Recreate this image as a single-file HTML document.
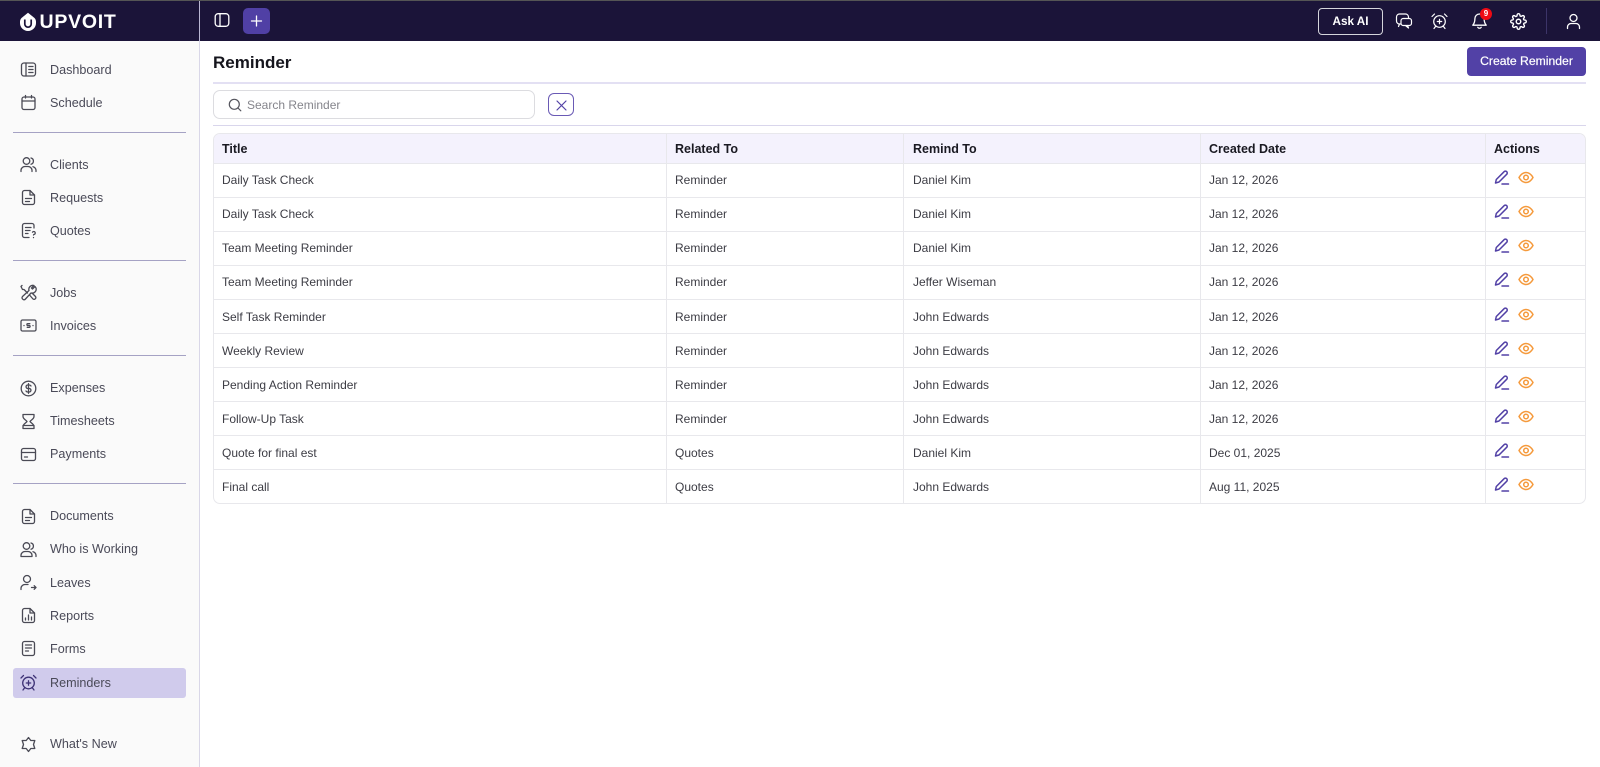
<!DOCTYPE html>
<html lang="en">
<head>
<meta charset="utf-8">
<title>Reminder</title>
<style>
*{box-sizing:border-box}
html,body{margin:0;padding:0;width:1600px;height:767px;overflow:hidden;background:#fff;font-family:"Liberation Sans",sans-serif;color:#2b2b35}
.abs{position:absolute}
#strip{position:absolute;left:0;top:0;width:1600px;height:1px;background:#555}
#top{position:absolute;left:0;top:1px;width:1600px;height:40px;background:#1b1439}
#side{position:absolute;left:0;top:41px;width:200px;height:726px;background:#fafafa;border-right:1px solid #d9d7e8}
#vline{position:absolute;left:199px;top:1px;width:1px;height:40px;background:#b9b6d3}
.logo{position:absolute;left:39.500px;top:11px;font-size:19.500px;font-weight:bold;color:#fff;letter-spacing:.75px;line-height:23px}
.it{position:absolute;left:50px;font-size:12.600px;line-height:16px;color:#4a4a58}
.ic{position:absolute;left:20px;width:17px;height:17px;fill:none;stroke:#4a4a55;stroke-width:1.3;stroke-linecap:round;stroke-linejoin:round}
.dv{position:absolute;left:13px;width:173px;height:1px;background:#a5a2c4}
.act{position:absolute;left:13px;top:668px;width:173px;height:30px;background:#d0cbec;border-radius:3px}
h1{position:absolute;left:213px;top:52px;margin:0;font-size:17px;line-height:22px;font-weight:bold;color:#15151d}
.btn{position:absolute;left:1467px;top:47px;width:119px;height:29px;background:#5241a6;border-radius:4px;color:#fff;font-size:12.200px;line-height:29px;text-align:center;-webkit-text-stroke:.2px #fff}
.ln{position:absolute;left:213px;width:1373px;height:2px;background:#e3e0f3}
.search{position:absolute;left:213px;top:90px;width:322px;height:29px;border:1px solid #dcdce0;border-radius:7px;background:#fff}
.search span{position:absolute;left:33px;top:6px;font-size:12px;line-height:16px;color:#85858c}
.x{position:absolute;left:548px;top:93px;width:26px;height:23px;border:1px solid #6a5ab5;border-radius:6px}
table{position:absolute;left:213px;top:133px;width:1373px;height:371px;border-collapse:separate;border-spacing:0;table-layout:fixed;border:1px solid #e8e8ec;border-radius:7px;overflow:hidden;font-size:12px}
th{height:29px;background:#f4f2fd;text-align:left;padding:0 0 0 8px;font-size:12.500px;font-weight:bold;color:#1a1a22;border-left:1px solid #e8e8ec}
td{height:34px;padding:0 0 2px 8px;color:#3c3c44;border-top:1px solid #e8e8ec;border-left:1px solid #e8e8ec}
tr:nth-child(n+6) td{padding-bottom:0}
th:first-child,td:first-child{border-left:0}
th:nth-child(3),td:nth-child(3){padding-left:9px}
td svg{display:block;fill:none;stroke-linecap:round;stroke-linejoin:round}
td .w{display:flex;gap:8px;align-items:center;margin-top:-4px}
</style>
</head>
<body>
<div id="strip"></div>
<div id="top"></div>
<div id="vline"></div>

<svg class="abs" style="left:20px;top:12px" width="16" height="19" viewBox="0 0 16 19"><path d="M8 .7L1.500 6Q0 7.500 0 10V11A8 8 0 0 0 16 11V10Q16 7.500 14.500 6Z" fill="#fff"/><path d="M4.800 7.500V12A3.200 3.200 0 0 0 11.200 12V7.500" fill="none" stroke="#1b1439" stroke-width="1.700"/><path d="M8 4V13" stroke="#fff" stroke-width="2"/></svg>
<div class="logo">UPVOIT</div>

<svg class="abs" style="left:214px;top:12px" width="16" height="16" viewBox="0 0 16 16" fill="none" stroke="#fff" stroke-width="1.3"><rect x="1.2" y="1.7" width="13.6" height="12.6" rx="3"/><path d="M6 1.7V14.3"/></svg>
<div class="abs" style="left:243px;top:8px;width:27px;height:26px;background:#5040a5;border-radius:5px"></div>
<svg class="abs" style="left:250px;top:14px" width="13" height="14" viewBox="0 0 13 14" stroke="#fff" stroke-width="1.3" stroke-linecap="round"><path d="M6.5 2V12M1.5 7H11.5"/></svg>

<div class="abs" style="left:1318px;top:8px;width:65px;height:27px;border:1px solid #d5d5dc;border-radius:4px;color:#fff;font-size:11.700px;font-weight:bold;line-height:25px;text-align:center">Ask AI</div>

<svg class="abs" style="left:1395px;top:12px" width="18" height="18" viewBox="0 0 18 18" fill="none" stroke="#fff" stroke-width="1.2" stroke-linejoin="round" stroke-linecap="round"><path d="M6 12H4.500A3 3 0 0 1 1.500 9V5A3 3 0 0 1 4.500 2H10.500A3 3 0 0 1 13.500 5V6"/><path d="M4.500 12L3.500 14.500"/><rect x="6" y="6.500" width="10.500" height="7" rx="2.200"/><path d="M12.500 13.500L13.500 16L10.500 13.500"/></svg>
<svg class="abs" style="left:1431px;top:12px" width="17" height="18" viewBox="0 0 17 18" fill="none" stroke="#fff" stroke-width="1.2" stroke-linecap="round"><circle cx="8.500" cy="9.500" r="5.800"/><path d="M8.500 7.300V11.700M6.300 9.500H10.700M1 4.500L3.500 2M16 4.500L13.500 2M4.500 14.500L3 16.500M12.500 14.500L14 16.500"/></svg>
<svg class="abs" style="left:1471px;top:12px" width="17" height="18" viewBox="0 0 17 18" fill="none" stroke="#fff" stroke-width="1.300" stroke-linecap="round" stroke-linejoin="round"><path d="M8.500 2A4.600 4.600 0 0 0 3.900 6.600C3.900 10 3.300 11.400 1.800 13.200H15.200C13.700 11.400 13.100 10 13.100 6.600A4.600 4.600 0 0 0 8.500 2Z"/><path d="M6.800 15.300A2 2 0 0 0 10.200 15.300"/></svg>
<div class="abs" style="left:1480px;top:8px;width:12px;height:12px;border-radius:50%;background:#ef0a14;color:#fff;font-size:8px;font-weight:bold;line-height:12px;text-align:center">9</div>
<svg class="abs" style="left:1510px;top:13px" width="17" height="17" viewBox="0 0 24 24" fill="none" stroke="#fff" stroke-width="2" stroke-linecap="round" stroke-linejoin="round"><circle cx="12" cy="12" r="3.200"/><path d="M19.400 15a1.650 1.650 0 0 0 .33 1.820l.06.06a2 2 0 1 1-2.830 2.830l-.06-.06a1.650 1.650 0 0 0-2.820 1.170V21a2 2 0 1 1-4 0v-.09A1.650 1.650 0 0 0 7.200 19.700l-.06.06a2 2 0 1 1-2.830-2.830l.06-.06A1.650 1.650 0 0 0 3.200 14H3a2 2 0 1 1 0-4h.09A1.650 1.650 0 0 0 4.300 7.200l-.06-.06a2 2 0 1 1 2.830-2.830l.06.06A1.650 1.650 0 0 0 10 3.200V3a2 2 0 1 1 4 0v.09a1.650 1.650 0 0 0 2.800 1.200l.06-.06a2 2 0 1 1 2.830 2.830l-.06.06A1.650 1.650 0 0 0 20.800 10H21a2 2 0 1 1 0 4h-.09a1.650 1.650 0 0 0-1.510 1z"/></svg>
<div class="abs" style="left:1546px;top:8px;width:1px;height:26px;background:#3c3468"></div>
<svg class="abs" style="left:1565px;top:13px" width="17" height="17" viewBox="0 0 17 17" fill="none" stroke="#fff" stroke-width="1.300" stroke-linecap="round"><circle cx="8.500" cy="5" r="3.500"/><path d="M2.500 15.500V14A3.500 3.500 0 0 1 6 10.500H11A3.500 3.500 0 0 1 14.500 14V15.500"/></svg>

<div id="side"></div>
<div class="act"></div>
<div class="dv" style="top:132px"></div>
<div class="dv" style="top:260px"></div>
<div class="dv" style="top:355px"></div>
<div class="dv" style="top:483px"></div>

<svg class="ic" style="top:61px" viewBox="0 0 17 17"><rect x="1.500" y="2" width="14" height="13" rx="2.500"/><path d="M6 2V15M8.800 5.500H13M8.800 8.500H13M8.800 11.500H13"/></svg>
<div class="it" style="top:62px">Dashboard</div>
<svg class="ic" style="top:94px" viewBox="0 0 17 17"><rect x="2" y="3" width="13" height="12.500" rx="2"/><path d="M2 7H15M5.500 1.500V4M11.500 1.500V4"/></svg>
<div class="it" style="top:95px">Schedule</div>

<svg class="ic" style="top:156px" viewBox="0 0 17 17"><circle cx="6.500" cy="5" r="3.300"/><path d="M1 15.500V14A4 4 0 0 1 5 10.500H8A4 4 0 0 1 12 14V15.500M11 2A3.200 3.200 0 0 1 11 8.200M13 10.700A4 4 0 0 1 16 14V15.500"/></svg>
<div class="it" style="top:157px">Clients</div>
<svg class="ic" style="top:189px" viewBox="0 0 17 17"><path d="M4.500 1.500H10L14.500 6V13.500A2 2 0 0 1 12.500 15.500H4.500A2 2 0 0 1 2.500 13.500V3.500A2 2 0 0 1 4.500 1.500Z"/><path d="M10 1.500V6H14.500M5.500 9.500H11.500M5.500 12.500H9.500"/></svg>
<div class="it" style="top:190px">Requests</div>
<svg class="ic" style="top:222px" viewBox="0 0 17 17"><path d="M14 6V3.500A2 2 0 0 0 12 1.500H4.500A2 2 0 0 0 2.500 3.500V13.500A2 2 0 0 0 4.500 15.500H9"/><path d="M5.500 5.500H11M5.500 8.500H10M5.500 11.500H8M12.500 10.200A1.500 1.500 0 1 1 13.800 12.500L13.500 13M13.500 15.500V15.600"/></svg>
<div class="it" style="top:223px">Quotes</div>

<svg class="ic" style="top:284px" viewBox="0 0 17 17"><path d="M2 1.500L1 2.500L2.500 5.500H4L7.500 9M15 2.500L12.500 5L11.500 4L14 1.500A4 4 0 0 0 9 6.500L2.500 12.500A2 2 0 0 0 5 15.500L11 9A4 4 0 0 0 16 4Z"/><path d="M9.500 11L13 15A1.800 1.800 0 0 0 15.500 12.500L12 9"/></svg>
<div class="it" style="top:285px">Jobs</div>
<svg class="ic" style="top:317px" viewBox="0 0 17 17"><rect x="1" y="3" width="15" height="11" rx="1.500"/><path d="M4 8.500V8.600M13 8.500V8.600M9.800 6.700H7.800A.9.900 0 0 0 7.800 8.500H9.200A.9.900 0 0 1 9.200 10.300H7.200"/></svg>
<div class="it" style="top:318px">Invoices</div>

<svg class="ic" style="top:380px" viewBox="0 0 17 17"><circle cx="8.500" cy="8.500" r="7.300"/><path d="M11 6A2 2 0 0 0 9.200 5H7.800A1.700 1.700 0 0 0 7.800 8.500H9.200A1.700 1.700 0 0 1 9.200 12H7.800A2 2 0 0 1 6 11M8.500 3.700V13.300"/></svg>
<div class="it" style="top:380px">Expenses</div>
<svg class="ic" style="top:413px" viewBox="0 0 17 17"><path d="M3 1.500H14V3.500C14 6 11 7 10 8.500C11 10 14 11 14 13.500V15.500H3V13.500C3 11 6 10 7 8.500C6 7 3 6 3 3.500Z"/><path d="M3 12.500H14"/></svg>
<div class="it" style="top:413px">Timesheets</div>
<svg class="ic" style="top:446px" viewBox="0 0 17 17"><rect x="1.500" y="2.500" width="14" height="12" rx="2"/><path d="M1.500 6.500H15.500M4.500 11H7.500"/></svg>
<div class="it" style="top:446px">Payments</div>

<svg class="ic" style="top:508px" viewBox="0 0 17 17"><path d="M4.500 1.500H10L14.500 6V13.500A2 2 0 0 1 12.500 15.500H4.500A2 2 0 0 1 2.500 13.500V3.500A2 2 0 0 1 4.500 1.500Z"/><path d="M10 1.500V6H14.500M5.500 9.500H11.500M5.500 12.500H9.500"/></svg>
<div class="it" style="top:508px">Documents</div>
<svg class="ic" style="top:541px" viewBox="0 0 17 17"><circle cx="6.500" cy="5" r="3.300"/><path d="M1 15.500V14A4 4 0 0 1 5 10.500H8A4 4 0 0 1 12 14V15.500H1ZM11 2A3.200 3.200 0 0 1 11 8.200M13 10.700A4 4 0 0 1 16 14V15.500"/></svg>
<div class="it" style="top:541px">Who is Working</div>
<svg class="ic" style="top:574px" viewBox="0 0 17 17"><circle cx="7" cy="5" r="3.500"/><path d="M1 15.500V14A4 4 0 0 1 5 10.500H8M11.500 13.500H16M14.200 11.700L16 13.500L14.200 15.300"/></svg>
<div class="it" style="top:575px">Leaves</div>
<svg class="ic" style="top:607px" viewBox="0 0 17 17"><path d="M4.500 1.500H10L14.500 6V13.500A2 2 0 0 1 12.500 15.500H4.500A2 2 0 0 1 2.500 13.500V3.500A2 2 0 0 1 4.500 1.500Z"/><path d="M10 1.500V6H14.500M5.500 13V11M8.500 13V8M11.500 13V10"/></svg>
<div class="it" style="top:608px">Reports</div>
<svg class="ic" style="top:640px" viewBox="0 0 17 17"><rect x="2.500" y="1.500" width="12" height="14" rx="2"/><path d="M5.500 5H11.500M5.500 8H11.500M5.500 11H8.500"/></svg>
<div class="it" style="top:641px">Forms</div>
<svg class="ic" style="top:674px;stroke:#3e3276" viewBox="0 0 17 17"><circle cx="8.500" cy="9" r="5.800"/><path d="M8.500 6.800V11.200M6.300 9H10.700M1 4L3.500 1.500M16 4L13.500 1.500M4.500 14L3 16M12.500 14L14 16"/></svg>
<div class="it" style="top:675px">Reminders</div>
<svg class="ic" style="top:736px" viewBox="0 0 17 17"><path d="M8.500 1.500L10.800 4.500H14.800L13.500 8.500L14.800 12.500H10.800L8.500 15.500L6.200 12.500H2.200L3.500 8.500L2.200 4.500H6.200Z"/></svg>
<div class="it" style="top:736px">What's New</div>

<h1>Reminder</h1>
<div class="btn">Create Reminder</div>
<div class="ln" style="top:82px"></div>
<div class="search"><svg class="abs" style="left:14px;top:7px" width="14" height="14" viewBox="0 0 14 14" fill="none" stroke="#55555d" stroke-width="1.200" stroke-linecap="round"><circle cx="6.300" cy="6.300" r="5"/><path d="M10 10L12.800 12.800"/></svg><span>Search Reminder</span></div>
<div class="x"><svg class="abs" style="left:7px;top:5.500px" width="11" height="11" viewBox="0 0 11 11" stroke="#5241a6" stroke-width="1.200" stroke-linecap="round"><path d="M1 1L10 10M10 1L1 10"/></svg></div>
<div class="ln" style="top:125px;height:1px;background:#d9d6ec"></div>

<svg width="0" height="0" style="position:absolute"><defs>
<g id="pen"><path d="M1.500 13L2.300 9.500L10 1.800A1.600 1.600 0 0 1 12.800 4.200L5 12Z" stroke="#5241a6" stroke-width="1.500"/><path d="M8 14H14.500" stroke="#5241a6" stroke-width="1.500"/></g>
<g id="eye"><path d="M1 6.500C3 3 5.200 1.500 8 1.500S13 3 15 6.500C13 10 10.800 11.500 8 11.500S3 10 1 6.500Z" stroke="#f59a3c" stroke-width="1.500"/><circle cx="8" cy="6.500" r="2.300" stroke="#f59a3c" stroke-width="1.500"/></g>
</defs></svg>

<table>
<colgroup><col style="width:452px"><col style="width:237px"><col style="width:297px"><col style="width:285px"><col></colgroup>
<tr><th>Title</th><th>Related To</th><th>Remind To</th><th>Created Date</th><th>Actions</th></tr>
<tr><td>Daily Task Check</td><td>Reminder</td><td>Daniel Kim</td><td>Jan 12, 2026</td><td><div class="w"><svg width="16" height="15"><use href="#pen"/></svg><svg width="16" height="13"><use href="#eye"/></svg></div></td></tr>
<tr><td>Daily Task Check</td><td>Reminder</td><td>Daniel Kim</td><td>Jan 12, 2026</td><td><div class="w"><svg width="16" height="15"><use href="#pen"/></svg><svg width="16" height="13"><use href="#eye"/></svg></div></td></tr>
<tr><td>Team Meeting Reminder</td><td>Reminder</td><td>Daniel Kim</td><td>Jan 12, 2026</td><td><div class="w"><svg width="16" height="15"><use href="#pen"/></svg><svg width="16" height="13"><use href="#eye"/></svg></div></td></tr>
<tr><td>Team Meeting Reminder</td><td>Reminder</td><td>Jeffer Wiseman</td><td>Jan 12, 2026</td><td><div class="w"><svg width="16" height="15"><use href="#pen"/></svg><svg width="16" height="13"><use href="#eye"/></svg></div></td></tr>
<tr><td>Self Task Reminder</td><td>Reminder</td><td>John Edwards</td><td>Jan 12, 2026</td><td><div class="w"><svg width="16" height="15"><use href="#pen"/></svg><svg width="16" height="13"><use href="#eye"/></svg></div></td></tr>
<tr><td>Weekly Review</td><td>Reminder</td><td>John Edwards</td><td>Jan 12, 2026</td><td><div class="w"><svg width="16" height="15"><use href="#pen"/></svg><svg width="16" height="13"><use href="#eye"/></svg></div></td></tr>
<tr><td>Pending Action Reminder</td><td>Reminder</td><td>John Edwards</td><td>Jan 12, 2026</td><td><div class="w"><svg width="16" height="15"><use href="#pen"/></svg><svg width="16" height="13"><use href="#eye"/></svg></div></td></tr>
<tr><td>Follow-Up Task</td><td>Reminder</td><td>John Edwards</td><td>Jan 12, 2026</td><td><div class="w"><svg width="16" height="15"><use href="#pen"/></svg><svg width="16" height="13"><use href="#eye"/></svg></div></td></tr>
<tr><td>Quote for final est</td><td>Quotes</td><td>Daniel Kim</td><td>Dec 01, 2025</td><td><div class="w"><svg width="16" height="15"><use href="#pen"/></svg><svg width="16" height="13"><use href="#eye"/></svg></div></td></tr>
<tr><td>Final call</td><td>Quotes</td><td>John Edwards</td><td>Aug 11, 2025</td><td><div class="w"><svg width="16" height="15"><use href="#pen"/></svg><svg width="16" height="13"><use href="#eye"/></svg></div></td></tr>
</table>
</body>
</html>
